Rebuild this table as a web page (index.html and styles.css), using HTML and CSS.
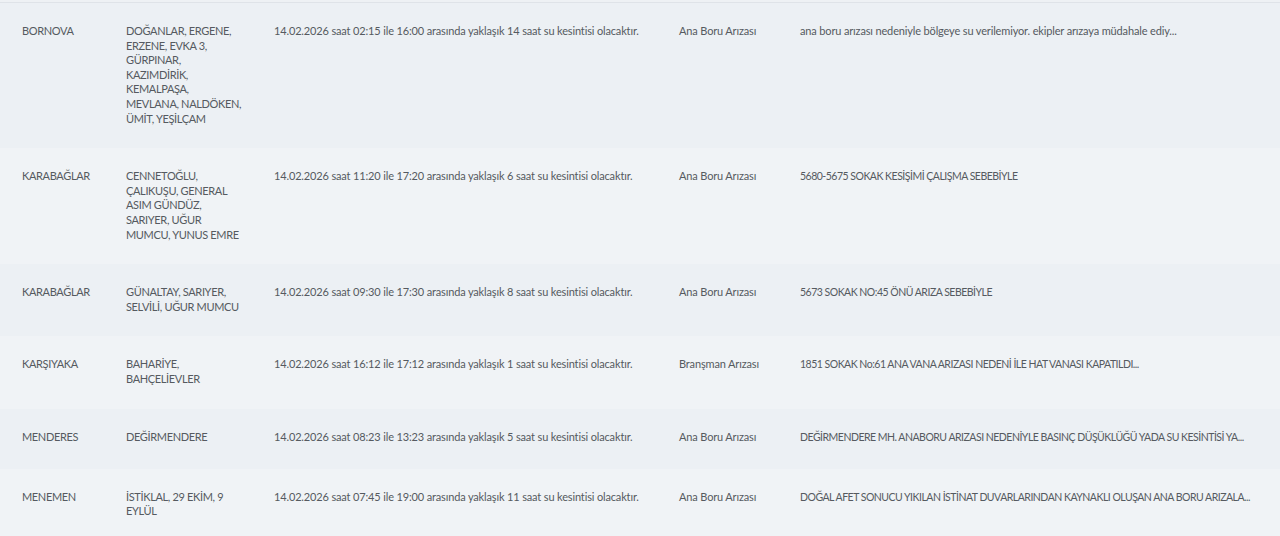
FILE: index.html
```html
<!doctype html>
<html lang="tr">
<head>
    <meta charset="UTF-8">
    <meta name="viewport" content="width=device-width, initial-scale=1.0">
    <title>Su Kesintileri</title>
    <link rel="stylesheet" href="styles.css">
</head>
<body>
    <div class="list">
        <table class="cuts">
            <colgroup>
                <col class="c-ilce">
                <col class="c-mah">
                <col class="c-aciklama">
                <col class="c-tip">
                <col class="c-neden">
            </colgroup>
            <tbody>
                <tr>
                    <td class="caps">BORNOVA</td>
                    <td class="caps">DOĞANLAR, ERGENE, ERZENE, EVKA 3, GÜRPINAR, KAZIMDİRİK, KEMALPAŞA, MEVLANA, NALDÖKEN, ÜMİT, YEŞİLÇAM</td>
                    <td>14.02.2026 saat 02:15 ile 16:00 arasında yaklaşık 14 saat su kesintisi olacaktır.</td>
                    <td>Ana Boru Arızası</td>
                    <td>ana boru arızası nedeniyle bölgeye su verilemiyor. ekipler arızaya müdahale ediy...</td>
                </tr>
                <tr>
                    <td class="caps">KARABAĞLAR</td>
                    <td class="caps">CENNETOĞLU, ÇALIKUŞU, GENERAL ASIM GÜNDÜZ, SARIYER, UĞUR MUMCU, YUNUS EMRE</td>
                    <td>14.02.2026 saat 11:20 ile 17:20 arasında yaklaşık 6 saat su kesintisi olacaktır.</td>
                    <td>Ana Boru Arızası</td>
                    <td class="note-caps">5680-5675 SOKAK KESİŞİMİ ÇALIŞMA SEBEBİYLE</td>
                </tr>
                <tr>
                    <td class="caps">KARABAĞLAR</td>
                    <td class="caps">GÜNALTAY, SARIYER, SELVİLİ, UĞUR MUMCU</td>
                    <td>14.02.2026 saat 09:30 ile 17:30 arasında yaklaşık 8 saat su kesintisi olacaktır.</td>
                    <td>Ana Boru Arızası</td>
                    <td class="note-caps">5673 SOKAK NO:45 ÖNÜ ARIZA SEBEBİYLE</td>
                </tr>
                <tr>
                    <td class="caps">KARŞIYAKA</td>
                    <td class="caps">BAHARİYE, BAHÇELİEVLER</td>
                    <td>14.02.2026 saat 16:12 ile 17:12 arasında yaklaşık 1 saat su kesintisi olacaktır.</td>
                    <td>Branşman Arızası</td>
                    <td class="note-caps">1851 SOKAK No:61 ANA VANA ARIZASI NEDENİ İLE HAT VANASI KAPATILDI...</td>
                </tr>
                <tr>
                    <td class="caps">MENDERES</td>
                    <td class="caps">DEĞİRMENDERE</td>
                    <td>14.02.2026 saat 08:23 ile 13:23 arasında yaklaşık 5 saat su kesintisi olacaktır.</td>
                    <td>Ana Boru Arızası</td>
                    <td class="note-caps">DEĞİRMENDERE MH. ANABORU ARIZASI NEDENİYLE BASINÇ DÜŞÜKLÜĞÜ YADA SU KESİNTİSİ YA...</td>
                </tr>
                <tr>
                    <td class="caps">MENEMEN</td>
                    <td class="caps">İSTİKLAL, 29 EKİM, 9 EYLÜL</td>
                    <td>14.02.2026 saat 07:45 ile 19:00 arasında yaklaşık 11 saat su kesintisi olacaktır.</td>
                    <td>Ana Boru Arızası</td>
                    <td class="note-caps">DOĞAL AFET SONUCU YIKILAN İSTİNAT DUVARLARINDAN KAYNAKLI OLUŞAN ANA BORU ARIZALA...</td>
                </tr>
            </tbody>
        </table>
    </div>
</body>
</html>
```
FILE: styles.css
```css
*{
    margin: 0;
    padding: 0;
    box-sizing: border-box;
}
html,body{
    width: 100%;
    height: 100%;
    overflow: hidden;
}
body{
    background: #eef1f4;
    font-family: Lato, "Noto Sans", sans-serif;
    font-size: 11px;
    letter-spacing: -0.15px;
    color: #555a60;
}
.list{
    padding-top: 2px;
}
.cuts{
    width: 100%;
    border-collapse: collapse;
    table-layout: fixed;
    border-top: 1px solid #dfe3e8;
}
.cuts .c-ilce{ width: 114px; }
.cuts .c-mah{ width: 148px; }
.cuts .c-aciklama{ width: 405px; }
.cuts .c-tip{ width: 121px; }
.cuts tr{
    background: #ecf0f4;
}
.cuts tr:nth-child(even){
    background: #f0f3f6;
}
.cuts td{
    height: 60px;
    padding: 21px 12px 22px;
    line-height: 14.6px;
    vertical-align: top;
}
.cuts td:first-child{
    padding-left: 22px;
}
.cuts td:nth-child(2){
    padding-right: 20px;
}
.cuts td:last-child{
    white-space: nowrap;
    overflow: hidden;
}
.cuts td.caps{
    letter-spacing: -0.35px;
}
.cuts td.note-caps{
    font-size: 10.5px;
    letter-spacing: -0.5px;
}
```
